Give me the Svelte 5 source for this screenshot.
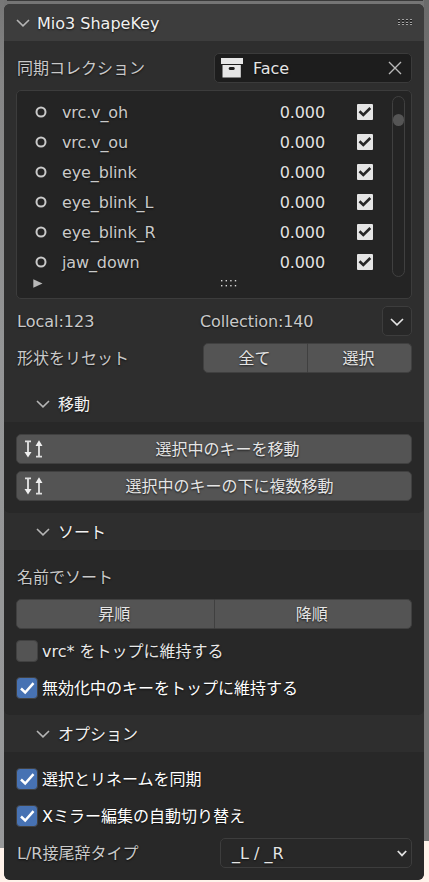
<script>
  const keys = ['vrc.v_oh', 'vrc.v_ou', 'eye_blink', 'eye_blink_L', 'eye_blink_R', 'jaw_down'];
  const moves = ['選択中のキーを移動', '選択中のキーの下に複数移動'];
</script>

{#snippet chevron()}
  <svg class="chev" width="14" height="8" viewBox="0 0 14 8"><path d="M1 1L7 6.8L13 1" /></svg>
{/snippet}

{#snippet dots()}
  <svg class="dots" width="16" height="7" viewBox="0 0 16 7">
    {#each [0, 4.6, 9.2, 13.8] as x}
      <rect {x} y="0" width="1.4" height="1.4" /><rect {x} y="5" width="1.4" height="1.4" />
    {/each}
  </svg>
{/snippet}

{#snippet check(label, on)}
  <div class="option" class:on>
    <div class="box">
      {#if on}<svg width="20" height="20" viewBox="0 0 20 20"><path d="M4 10.5L8.2 14.5L16.5 5.2" /></svg>{/if}
    </div>
    <span>{label}</span>
  </div>
{/snippet}

<div class="stage">
  <div class="above"></div>
  <main class="panel">
    <header class="title">
      {@render chevron()}
      <span>Mio3 ShapeKey</span>
      <svg class="grip" width="15" height="7" viewBox="0 0 15 7">
        {#each [0, 4, 8, 12] as x}
          <rect {x} y="0" width="2" height="1" fill="#a2a2a2" /><rect {x} y="1" width="2" height="1" fill="#171717" />
          <rect {x} y="3" width="2" height="1" fill="#a2a2a2" /><rect {x} y="4" width="2" height="1" fill="#171717" />
          <rect {x} y="5" width="2" height="1" fill="#a2a2a2" />
        {/each}
      </svg>
    </header>

    <section class="main">
      <div class="row collection">
        <span>同期コレクション</span>
        <div class="field">
          <svg width="22" height="20" viewBox="0 0 22 20">
            <path fill="#e6e6e6" fill-rule="evenodd" d="M0 0H22V6H0ZM1.5 7H19.8V19.5H1.5ZM9 9C7.3 9 7.3 12 9 12H12.5C14.2 12 14.2 9 12.5 9Z" />
          </svg>
          <span>Face</span>
          <svg class="close" width="14" height="14" viewBox="0 0 14 14"><path d="M1 1L13 13M13 1L1 13" /></svg>
        </div>
      </div>

      <div class="list">
        <div class="entries">
          <div class="keys">
            {#each keys as key}
              <div class="key">
                <svg width="14" height="14" viewBox="0 0 14 14"><circle cx="7" cy="7" r="4.5" /></svg>
                <span class="name">{key}</span>
                <span class="value">0.000</span>
                <svg class="mute" width="16" height="16" viewBox="0 0 16 16">
                  <rect width="16" height="16" rx="1" fill="#e5e5e5" />
                  <path d="M2.5 7.3L6.3 11L13.3 4" />
                </svg>
              </div>
            {/each}
          </div>
          <div class="scroll"><i></i></div>
        </div>
        <div class="foot">
          <svg width="10" height="9" viewBox="0 0 10 9"><path fill="#b8b8b8" d="M0.3 0.3L9.5 4.5L0.3 8.7Z" /></svg>
          {@render dots()}
        </div>
      </div>

      <div class="row counts">
        <span class="local">Local:123</span>
        <span class="total">Collection:140</span>
        <div class="expand">{@render chevron()}</div>
      </div>

      <div class="row reset">
        <span>形状をリセット</span>
        <div class="pair"><button>全て</button><button>選択</button></div>
      </div>
    </section>

    <h2>{@render chevron()}<span>移動</span></h2>
    <section class="sub moves">
      {#each moves as label}
        <button class="move">
          <svg width="20" height="20" viewBox="0 0 20 20">
            <path class="line" d="M2 2.4H8M5 2V14M13 17.6H19M16 18V6" />
            <path class="tip" d="M1.5 13H8.5L5 18.5ZM12.5 7H19.5L16 1.2Z" />
          </svg>
          <span>{label}</span>
        </button>
      {/each}
    </section>

    <h2>{@render chevron()}<span>ソート</span></h2>
    <section class="sub sort">
      <div class="row"><span>名前でソート</span></div>
      <div class="pair"><button>昇順</button><button>降順</button></div>
      {@render check('vrc* をトップに維持する', false)}
      {@render check('無効化中のキーをトップに維持する', true)}
    </section>

    <h2>{@render chevron()}<span>オプション</span></h2>
    <section class="sub opts">
      {@render check('選択とリネームを同期', true)}
      {@render check('Xミラー編集の自動切り替え', true)}
      <div class="row suffix">
        <span>L/R接尾辞タイプ</span>
        <div class="select">
          <span>_L / _R</span>
          <svg width="10" height="7" viewBox="0 0 10 7"><path d="M0.8 1L5 5.4L9.2 1" /></svg>
        </div>
      </div>
    </section>
  </main>
</div>

<style>
  :global(body) { margin: 0; overflow: hidden; }
  .stage {
    box-sizing: border-box; width: 429px; height: 882px; padding-right: 5px; padding-left: 4px;
    background:
      linear-gradient(#777 0, #858585 80px, #949596 350px, #98999a 848px, #fff2ea 848px) 0 0 / 4px 100% no-repeat,
      linear-gradient(#6b6b6b 0, #777 300px, #777 841px, #fff2ea 841px) 424px 0 / 5px 100% no-repeat,
      linear-gradient(#757575 0, #757575 841px, #fff2ea 841px);
    font: 16px/30px "DejaVu Sans", "Noto Sans CJK JP", sans-serif;
    color: #c9c9c9; text-shadow: 0 1px 2px rgba(0, 0, 0, .7);
  }
  .above { height: 1px; width: 416px; margin-left: 3px; margin-bottom: 3px; background: #3a3a3a; }
  .panel { display: flex; flex-direction: column; height: 876px; border-radius: 6px; overflow: hidden; background: #2e2e2e; }
  svg { display: block; flex: none; }
  span { padding-top: 2px; white-space: nowrap; }
  .chev path { fill: none; stroke: #b5b5b5; stroke-width: 1.6; }
  .title { display: flex; align-items: center; height: 37px; padding: 0 11px 0 12px; background: #3d3d3d; color: #f0f0f0; }
  .title span { flex: 1; margin-left: 7px; }
  .main { padding: 12px 12px 0; }
  .row { display: flex; align-items: center; height: 30px; }
  .row > span:first-child { margin-left: 1px; }
  .collection { justify-content: space-between; }
  .field { display: flex; align-items: center; box-sizing: border-box; width: 198px; height: 30px; padding: 0 9px 0 6px; border: 1px solid #3b3b3b; border-radius: 5px; background: #1d1d1d; color: #e4e4e4; }
  .field span { flex: 1; margin-left: 10px; }
  .close path { stroke: #b9b9b9; stroke-width: 1.4; }
  .list { box-sizing: border-box; height: 209px; margin-top: 7px; padding: 6px 6px 0 16px; border: 1px solid #3c3c3c; border-radius: 5px; background: #242424; }
  .entries { display: flex; }
  .keys { flex: 1; }
  .key { display: flex; align-items: center; height: 30px; }
  .key > svg:first-child { margin-left: 1px; }
  .key circle { fill: none; stroke: #c9c9c9; stroke-width: 2; }
  .name { flex: 1; margin-left: 14px; letter-spacing: -.12px; }
  .value { margin-right: 32px; color: #e2e2e2; letter-spacing: -.1px; }
  .mute { margin-right: 19px; }
  .mute path { fill: none; stroke: #262626; stroke-width: 2.6; }
  .scroll { box-sizing: border-box; width: 13px; height: 181px; margin-top: -1px; border: 1px solid #404040; border-radius: 7px; }
  .scroll i { display: block; width: 11px; height: 12px; margin-top: 17px; border-radius: 6px; background: #555; }
  .foot { display: flex; align-items: flex-start; }
  .foot svg:first-child { margin-top: 2px; }
  .foot .dots { margin: 3px 0 0 178px; }
  .dots rect { fill: #d8d8d8; }
  .counts { margin-top: 7px; }
  .local { width: 183px; }
  .total { letter-spacing: -.12px; }
  .expand { box-sizing: border-box; display: flex; align-items: center; justify-content: center; width: 30px; height: 30px; margin-left: auto; padding-right: 1px; padding-top: 1px; border: 1px solid #3d3d3d; border-radius: 5px; background: #282828; }
  .expand .chev path { stroke: #e5e5e5; }
  .reset { justify-content: space-between; margin-top: 7px; }
  .reset .pair { width: 209px; }
  .pair { display: flex; height: 30px; }
  button { box-sizing: border-box; height: 30px; margin: 0; padding: 0; border: 1px solid #404040; border-radius: 5px; background: #545454; color: #e5e5e5; font: inherit; line-height: 28px; text-shadow: inherit; }
  .pair button { flex: 1; padding: 2px 2px 0 0; line-height: 26px; }
  .pair button:first-child { border-radius: 5px 0 0 5px; }
  .pair button:last-child { border-left: 0; border-radius: 0 5px 5px 0; }
  h2 { display: flex; align-items: center; height: 37px; margin: 0; padding-left: 32px; font: inherit; color: #f2f2f2; }
  h2 span { margin-left: 8px; }
  .main + h2 { margin-top: 12px; }
  .sub { box-sizing: border-box; padding: 12px 12px 0; border-radius: 0 0 6px 6px; background: #282828; }
  .moves { display: flex; flex-direction: column; gap: 7px; height: 91px; }
  .move { display: flex; align-items: center; width: 396px; padding-left: 6px; }
  .move span { flex: 1; text-align: center; }
  .move:first-child span { margin-right: 1px; padding-left: 2px; }
  .move:last-child span { padding-left: 5px; }
  .line { stroke: #dedede; stroke-width: 1.9; }
  .tip { fill: #efefef; }
  .sort { display: flex; flex-direction: column; gap: 7px; height: 165px; }
  .option { display: flex; align-items: center; height: 30px; color: #e8e8e8; }
  .box { box-sizing: border-box; width: 22px; height: 22px; margin-right: 4px; border: 1px solid #414141; border-radius: 4px; background: #545454; }
  .on { color: #fff; }
  .on .box { background: #4772b3; }
  .box path { fill: none; stroke: #fff; stroke-width: 2.5; }
  .opts { display: flex; flex-direction: column; gap: 7px; height: 128px; }
  .suffix { justify-content: space-between; }
  .select { box-sizing: border-box; display: flex; align-items: center; justify-content: space-between; width: 192px; height: 30px; padding: 0 4px 0 11px; border: 1px solid #3d3d3d; border-radius: 5px; background: #282828; color: #e5e5e5; }
  .select path { fill: none; stroke: #e0e0e0; stroke-width: 1.8; }
</style>
